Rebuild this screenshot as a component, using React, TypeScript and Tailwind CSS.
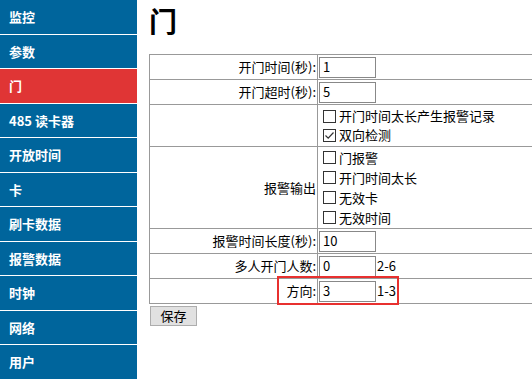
import React from "react";

const menu = ["监控", "参数", "门", "485 读卡器", "开放时间", "卡", "刷卡数据", "报警数据", "时钟", "网络", "用户"];

const font = { fontFamily: '"Noto Sans CJK SC", "Noto Sans", sans-serif' };

function Box({ checked, label }: { checked?: boolean; label: string }) {
  return (
    <div className="flex items-center h-[19px]">
      <span className="w-[13px] h-[13px] border border-[#333] bg-white flex items-center justify-center mr-[3px]">
        {checked && (
          <svg width="11" height="11" viewBox="0 0 11 11">
            <path d="M1.5 5.5 L4.2 8.2 L9.5 2.5" fill="none" stroke="#333" strokeWidth="1.2" />
          </svg>
        )}
      </span>
      <span>{label}</span>
    </div>
  );
}

function Input({ value }: { value: string }) {
  return (
    <div className="w-[57px] h-[21px] border border-[#888] bg-white flex items-center pl-[3px] text-[13px]">
      {value}
    </div>
  );
}

export default function App() {
  return (
    <div className="w-[532px] h-[380px] flex bg-white overflow-hidden text-[13px] text-black" style={font}>
      <div className="w-[137px] shrink-0 flex flex-col">
        {menu.map((m) => (
          <div
            key={m}
            className={`h-[34.5px] shrink-0 border-b border-white flex items-center pl-[9px] text-white font-bold text-[13px] ${
              m === "门" ? "bg-[#e03535]" : "bg-[#00659c]"
            }`}
          >
            {m}
          </div>
        ))}
      </div>
      <div className="flex-1 pl-[12px] relative">
        <div className="h-[54px] pt-[1px] text-[28px] font-bold leading-[40px]">门</div>
        <div className="w-[420px] border-t border-l border-[#999] grid grid-cols-[168px_1fr]">
          <div className="h-[25px] border-r border-b border-[#999] flex items-center justify-end pr-[1px]">开门时间(秒):</div>
          <div className="h-[25px] border-b border-[#999] flex items-center pl-[1px]"><Input value="1" /></div>

          <div className="h-[25px] border-r border-b border-[#999] flex items-center justify-end pr-[1px]">开门超时(秒):</div>
          <div className="h-[25px] border-b border-[#999] flex items-center pl-[1px]"><Input value="5" /></div>

          <div className="h-[42px] border-r border-b border-[#999]"></div>
          <div className="h-[42px] border-b border-[#999] flex flex-col justify-center pl-[5px]">
            <Box label="开门时间太长产生报警记录" />
            <Box checked label="双向检测" />
          </div>

          <div className="h-[82px] border-r border-b border-[#999] flex items-center justify-end pr-[1px]">报警输出</div>
          <div className="h-[82px] border-b border-[#999] flex flex-col justify-center pl-[5px] gap-[1px]">
            <Box label="门报警" />
            <Box label="开门时间太长" />
            <Box label="无效卡" />
            <Box label="无效时间" />
          </div>

          <div className="h-[25px] border-r border-b border-[#999] flex items-center justify-end pr-[1px]">报警时间长度(秒):</div>
          <div className="h-[25px] border-b border-[#999] flex items-center pl-[1px]"><Input value="10" /></div>

          <div className="h-[25px] border-r border-b border-[#999] flex items-center justify-end pr-[1px]">多人开门人数:</div>
          <div className="h-[25px] border-b border-[#999] flex items-center pl-[1px] gap-[1px]"><Input value="0" /><span>2-6</span></div>

          <div className="h-[25px] border-r border-b border-[#999] flex items-center justify-end pr-[1px]">方向:</div>
          <div className="h-[25px] border-b border-[#999] flex items-center pl-[1px] gap-[1px]"><Input value="3" /><span>1-3</span></div>
        </div>
        <div className="mt-[2px] ml-[1px] w-[47px] h-[20px] bg-[#e1e1e1] border border-[#adadad] flex items-center justify-center text-[13px]">保存</div>
        <div className="absolute left-[140px] top-[276px] w-[122px] h-[29px] border-2 border-[#e8302f] pointer-events-none"></div>
      </div>
    </div>
  );
}
